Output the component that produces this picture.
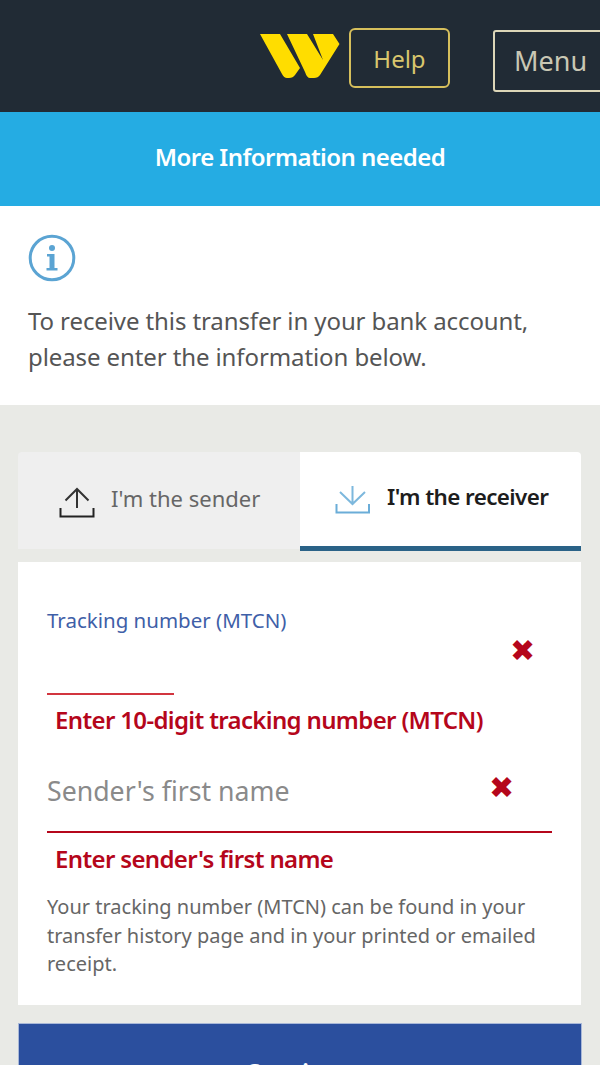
<script>
  let tab = 'receiver';
</script>

<div class="page">
  <header class="topbar">
    <svg class="logo" viewBox="0 0 80 46" width="80" height="46" aria-label="logo">
      <path d="M0 1 H20 L40 35 L35 42 Q33 45 29 45 H27 Q24 45 22 41 Z" fill="#ffdd00" />
      <path d="M27 1 H47 L63 27 L53 1 H73 L79.500 11 L60 42 Q58 45 54 45 H50 Q47 45 45 39 Z" fill="#ffdd00" />
    </svg>
    <button class="help">Help</button>
    <button class="menu">Menu</button>
  </header>

  <div class="banner">More Information needed</div>

  <section class="intro">
    <svg class="info" viewBox="0 0 48 48" width="48" height="48">
      <circle cx="24" cy="24" r="21.800" fill="none" stroke="#5ba4d3" stroke-width="3" />
      <circle cx="24" cy="14" r="3" fill="#5ba4d3" />
      <path d="M19 20 H26.500 V34 H29.500 V36.500 H18.500 V34 H21.500 V22.500 H19 Z" fill="#5ba4d3" />
    </svg>
    <p>To receive this transfer in your bank account,<br />please enter the information below.</p>
  </section>

  <main class="content">
    <div class="tabs">
      <button class="tab" class:active={tab === 'sender'}>
        <svg viewBox="0 0 36 32" width="36" height="32" class="tab-icon">
          <path d="M18 3 V22 M6.500 14.500 L18 3 L29.500 14.500" fill="none" stroke="#333" stroke-width="2" />
          <path d="M1.500 22 V30.500 H34.500 V22" fill="none" stroke="#222" stroke-width="2" />
        </svg>
        <span>I'm the sender</span>
      </button>
      <button class="tab" class:active={tab === 'receiver'}>
        <svg viewBox="0 0 36 32" width="36" height="32" class="tab-icon">
          <path d="M17.500 2 V20 M5 8 L17.500 20 L30 8" fill="none" stroke="#7db8dd" stroke-width="2" />
          <path d="M1.500 20 V28.500 H34 V20" fill="none" stroke="#6badd8" stroke-width="2" />
        </svg>
        <span>I'm the receiver</span>
      </button>
    </div>

    <form class="card">
      <div class="field mtcn">
        <label for="mtcn">Tracking number (MTCN)</label>
        <span class="cross">✖</span>
        <div class="short-line"></div>
      </div>
      <p class="error">Enter 10-digit tracking number (MTCN)</p>

      <div class="field name">
        <span class="placeholder">Sender's first name</span>
        <span class="cross">✖</span>
      </div>
      <p class="error">Enter sender's first name</p>

      <p class="hint">Your tracking number (MTCN) can be found in your transfer history page and in your printed or emailed receipt.</p>
    </form>

    <button class="continue" type="button">Continue</button>
  </main>
</div>

<style>
  :global(body) {
    margin: 0;
    font-family: "Noto Sans", "Open Sans", sans-serif;
  }

  .page {
    width: 600px;
    height: 1065px;
    overflow: hidden;
    background: #e9eae6;
  }

  button {
    font-family: inherit;
    background: none;
  }

  .topbar {
    height: 112px;
    background: #212b35;
    display: flex;
    align-items: flex-start;
    box-sizing: border-box;
    padding: 28px 0 0 260px;
    overflow: hidden;
  }

  .logo {
    flex: none;
    margin: 5px 9px 0 0;
  }

  .help {
    flex: none;
    width: 101px;
    height: 60px;
    border: 2px solid #d6bf5c;
    border-radius: 6px;
    color: #d8c66d;
    font-size: 24px;
    padding: 0;
  }

  .menu {
    flex: none;
    width: 130px;
    height: 62px;
    margin: 2px 0 0 43px;
    border: 2px solid #dcd6b8;
    border-radius: 3px;
    color: #c9c7b4;
    font-size: 27px;
    text-align: left;
    padding: 0 0 2px 19px;
  }

  .banner {
    height: 94px;
    box-sizing: border-box;
    padding-bottom: 5px;
    background: #25ace3;
    color: #fff;
    font-size: 24px;
    font-weight: 600;
    display: flex;
    align-items: center;
    justify-content: center;
    letter-spacing: -0.55px;
  }

  .intro {
    background: #fff;
    height: 199px;
    box-sizing: border-box;
    padding: 28px 28px 0;
  }

  .info {
    display: block;
  }

  .intro p {
    margin: 21px 0 0;
    font-size: 24px;
    line-height: 36px;
    color: #555;
    letter-spacing: -0.1px;
  }

  .content {
    padding: 47px 19px 0 18px;
  }

  .tabs {
    display: flex;
    align-items: flex-start;
    height: 99px;
  }

  .tab {
    flex: 1;
    height: 97px;
    display: flex;
    align-items: center;
    gap: 16px;
    border: 0;
    padding: 0 0 6px 41px;
    background: #efefef;
    color: #666;
    font-size: 22px;
    border-radius: 4px 0 0 0;
  }

  .tab.active {
    flex: none;
    width: 281px;
    height: 99px;
    padding: 0 0 6px 35px;
    background: #fff;
    color: #1d1d1d;
    font-weight: 600;
    font-size: 22.400px;
    letter-spacing: -0.6px;
    border-bottom: 5px solid #2a6287;
    border-radius: 0 4px 0 0;
  }

  .tab-icon {
    flex: none;
    margin-top: 8px;
  }

  .card {
    margin-top: 11px;
    background: #fff;
    height: 443px;
    box-sizing: border-box;
    padding: 44px 29px 0 29px;
  }

  .field {
    position: relative;
  }

  .mtcn {
    height: 89px;
  }

  .mtcn label {
    display: block;
    color: #3f5fa8;
    font-size: 20.500px;
    line-height: 28px;
  }

  .short-line {
    position: absolute;
    left: 0;
    bottom: 0;
    width: 127px;
    height: 2px;
    background: #d2353f;
  }

  .cross {
    position: absolute;
    color: #b5061b;
    font-family: "DejaVu Sans", sans-serif;
    font-size: 30px;
    line-height: 1;
  }

  .mtcn .cross {
    left: 463px;
    top: 30px;
  }

  .name .cross {
    left: 442px;
    top: 20px;
  }

  .name {
    margin-top: 16px;
    height: 80px;
    border-bottom: 2px solid #b5061b;
    box-sizing: border-box;
  }

  .placeholder {
    display: block;
    padding-top: 18px;
    color: #8a8a8a;
    font-size: 26.700px;
    line-height: 40px;
  }

  .error {
    margin: 9px 0 0 8px;
    color: #b5061b;
    font-size: 24px;
    line-height: 34px;
    font-weight: 600;
    letter-spacing: -0.65px;
  }

  .mtcn + .error {
    margin-top: 8px;
  }

  .hint {
    margin: 17px 0 0;
    color: #666;
    font-size: 20px;
    line-height: 28.500px;
  }

  .continue {
    display: block;
    width: 564px;
    height: 90px;
    margin-top: 18px;
    border: 1px solid #a9b8d8;
    background: #2b4f9e;
    color: #fff;
    font-size: 25px;
    font-weight: 600;
    padding: 7px 0 0;
  }
</style>
